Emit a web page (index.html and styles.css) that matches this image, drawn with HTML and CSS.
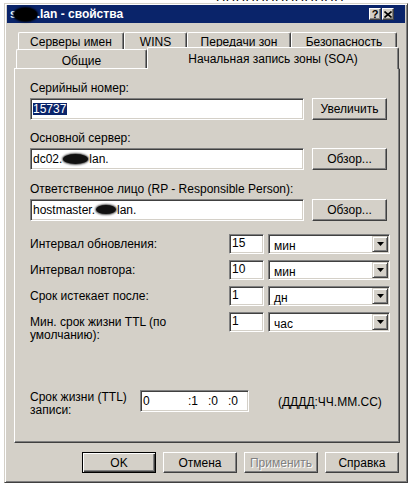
FILE: index.html
```html
<!DOCTYPE html>
<html lang="ru">
<head>
<meta charset="utf-8">
<title>свойства</title>
<link rel="stylesheet" href="styles.css">
</head>
<body>
<div class="behind"><span>ППППППППППППП</span></div>
<div class="window">
  <div class="titlebar">
    <span class="title"><span class="title-s">s</span><span class="blob blob-title"></span>.lan - свойства</span>
    <div class="tbtns">
      <span class="tbtn tbtn-help">?</span>
      <span class="tbtn tbtn-close"><svg width="8" height="7" viewBox="0 0 8 7"><path d="M0.5 0.5 L7.5 6.5 M7.5 0.5 L0.5 6.5" stroke="#000" stroke-width="1.6" fill="none"/></svg></span>
    </div>
  </div>

  <div class="tabs-back">
    <div class="tab tab-servers">Серверы имен</div>
    <div class="tab tab-wins">WINS</div>
    <div class="tab tab-transfer">Передачи зон</div>
    <div class="tab tab-security">Безопасность</div>
  </div>
  <div class="tabs-front">
    <div class="tab tab-general">Общие</div>
    <div class="tab tab-soa active">Начальная запись зоны (SOA)</div>
  </div>

  <div class="panel">
    <div class="section">
      <div class="field-label">Серийный номер:</div>
      <div class="field-row">
        <div class="input text-input"><span class="selected">15737</span></div>
        <div class="btn side-btn">Увеличить</div>
      </div>
    </div>
    <div class="section section-2">
      <div class="field-label">Основной сервер:</div>
      <div class="field-row">
        <div class="input text-input">dc02.<span class="blob blob-in1"></span>lan.</div>
        <div class="btn side-btn">Обзор...</div>
      </div>
    </div>
    <div class="section section-3">
      <div class="field-label">Ответственное лицо (RP - Responsible Person):</div>
      <div class="field-row">
        <div class="input text-input">hostmaster.<span class="blob blob-in2"></span>lan.</div>
        <div class="btn side-btn">Обзор...</div>
      </div>
    </div>

    <div class="intervals">
      <div class="irow">
        <div class="ilabel">Интервал обновления:</div>
        <div class="input num-input">15</div>
        <div class="input combo"><span class="combo-text">мин</span><span class="drop"><svg width="7" height="4" viewBox="0 0 7 4"><path d="M0 0 H7 L3.5 4 Z" fill="#000"/></svg></span></div>
      </div>
      <div class="irow">
        <div class="ilabel">Интервал повтора:</div>
        <div class="input num-input">10</div>
        <div class="input combo"><span class="combo-text">мин</span><span class="drop"><svg width="7" height="4" viewBox="0 0 7 4"><path d="M0 0 H7 L3.5 4 Z" fill="#000"/></svg></span></div>
      </div>
      <div class="irow">
        <div class="ilabel">Срок истекает после:</div>
        <div class="input num-input">1</div>
        <div class="input combo"><span class="combo-text">дн</span><span class="drop"><svg width="7" height="4" viewBox="0 0 7 4"><path d="M0 0 H7 L3.5 4 Z" fill="#000"/></svg></span></div>
      </div>
      <div class="irow">
        <div class="ilabel">Мин. срок жизни TTL (по<br>умолчанию):</div>
        <div class="input num-input">1</div>
        <div class="input combo"><span class="combo-text">час</span><span class="drop"><svg width="7" height="4" viewBox="0 0 7 4"><path d="M0 0 H7 L3.5 4 Z" fill="#000"/></svg></span></div>
      </div>
    </div>

    <div class="ttl-row">
      <div class="ttl-label">Срок жизни (TTL)<br>записи:</div>
      <div class="input ttl-input"><span class="ttl-d">0</span><span class="ttl-p">:1</span><span class="ttl-p">:0</span><span class="ttl-p">:0</span></div>
      <div class="ttl-hint">(ДДДД:ЧЧ.ММ.СС)</div>
    </div>
  </div>

  <div class="buttons">
    <div class="btn dlg-btn default">OK</div>
    <div class="btn dlg-btn">Отмена</div>
    <div class="btn dlg-btn disabled">Применить</div>
    <div class="btn dlg-btn">Справка</div>
  </div>
</div>
</body>
</html>
```
FILE: styles.css
```css
* { box-sizing: border-box; }

body {
  margin: 0;
  background: #fff;
  font-family: "Liberation Sans", Arial, sans-serif;
  font-size: 12px;
  color: #000;
}

.behind {
  height: 3px;
  overflow: hidden;
  padding-left: 216px;
}
.behind span {
  display: block;
  margin-top: -10px;
  font-size: 13px;
  line-height: 13px;
  letter-spacing: 0.5px;
}

.window {
  margin-left: 4px;
  width: 404px;
  height: 480px;
  background: #d4d0c8;
  border: 1px solid;
  border-color: #d4d0c8 #404040 #404040 #d4d0c8;
  box-shadow: inset 1px 1px #fff, inset -1px -1px #808080;
  padding: 1px 2px 0 2px;
}

/* title bar */
.titlebar {
  height: 18px;
  background: #0a246a;
  display: flex;
  align-items: center;
  justify-content: space-between;
  padding-left: 3px;
  padding-right: 11px;
}
.title {
  color: #fff;
  font-weight: bold;
  font-size: 12px;
  display: flex;
  align-items: center;
  white-space: pre;
}
.title-s { margin-right: -3px; }
.blob {
  display: inline-block;
  background: #000;
  border-radius: 50%;
}
.blob-title {
  width: 23px;
  height: 13px;
  margin-top: 1px;
  box-shadow: 0 0 2px 1px #000;
}
.tbtns {
  display: flex;
}
.tbtn {
  width: 12px;
  height: 12px;
  background: #d4d0c8;
  border: 1px solid;
  border-color: #fff #404040 #404040 #fff;
  box-shadow: inset -1px -1px #808080;
  display: flex;
  align-items: center;
  justify-content: center;
  font-weight: bold;
  font-size: 11px;
  line-height: 10px;
  color: #000;
}
.tbtn-help { margin-right: 1px; }

/* tabs */
.tabs-back {
  display: flex;
  margin-top: 9px;
  margin-left: 11px;
  height: 17px;
}
.tabs-front {
  display: flex;
  margin-left: 9px;
  height: 19px;
  align-items: flex-start;
}
.tab {
  height: 100%;
  border-top: 1px solid #fff;
  border-left: 1px solid #fff;
  border-right: 1px solid #404040;
  border-top-left-radius: 2px;
  border-top-right-radius: 2px;
  box-shadow: inset -1px 0 #808080;
  background: #d4d0c8;
  display: flex;
  justify-content: center;
  align-items: center;
  padding-top: 2px;
  white-space: nowrap;
}
.tab-servers { width: 106px; }
.tab-wins { width: 63px; }
.tab-transfer { width: 104px; }
.tab-security { width: 106px; }
.tab-general { width: 131px; height: 19px; padding-top: 3px; }
.tab-soa {
  width: 252px;
  height: 22px;
  margin-top: -2px;
  position: relative;
  z-index: 2;
  align-items: flex-start;
  padding-top: 4px;
}

/* panel */
.panel {
  margin-left: 7px;
  width: 386px;
  height: 375px;
  border: 1px solid;
  border-color: #fff #404040 #404040 #fff;
  box-shadow: inset -1px -1px #808080;
  padding: 13px 0 0 15px;
}
.field-label {
  height: 13px;
  line-height: 13px;
  white-space: nowrap;
}
.field-row {
  display: flex;
  margin-top: 3px;
}
.section-2 { margin-top: 12px; }
.section-3 { margin-top: 13px; }

.input {
  background: #fff;
  border: 1px solid;
  border-color: #808080 #fff #fff #808080;
  box-shadow: inset 1px 1px #404040, inset -1px -1px #d4d0c8;
  display: flex;
  align-items: center;
  padding-left: 2px;
  white-space: nowrap;
}
.text-input {
  width: 274px;
  height: 22px;
  padding-bottom: 1px;
}
.selected {
  background: #0a246a;
  color: #fff;
  line-height: 12px;
  padding-right: 1px;
}
.blob-in1 {
  width: 25px;
  height: 10px;
  margin: 0 1px;
  background: #111;
  box-shadow: 0 0 2px 1px #555;
}
.blob-in2 {
  width: 20px;
  height: 9px;
  margin: 0 1px;
  background: #111;
  box-shadow: 0 0 2px 1px #555;
}

.btn {
  background: #d4d0c8;
  border: 1px solid;
  border-color: #fff #404040 #404040 #fff;
  box-shadow: inset -1px -1px #808080;
  display: flex;
  align-items: center;
  justify-content: center;
  white-space: nowrap;
}
.side-btn {
  width: 75px;
  height: 22px;
  margin-left: 8px;
}

/* intervals */
.intervals {
  margin-top: 13px;
  display: flex;
  flex-direction: column;
  gap: 6px;
}
.irow {
  display: flex;
  align-items: flex-start;
}
.ilabel {
  width: 199px;
  padding-top: 4px;
  line-height: 13px;
}
.num-input {
  width: 35px;
  height: 20px;
  align-items: flex-start;
  padding-top: 1px;
  line-height: 14px;
}
.combo {
  width: 122px;
  height: 20px;
  margin-left: 4px;
  padding-left: 5px;
  justify-content: space-between;
  padding-right: 0;
}
.combo-text {
  padding-top: 3px;
}
.drop {
  width: 16px;
  height: 16px;
  background: #d4d0c8;
  border: 1px solid;
  border-color: #d4d0c8 #404040 #404040 #d4d0c8;
  box-shadow: inset 1px 1px #fff, inset -1px -1px #808080;
  display: flex;
  align-items: center;
  justify-content: center;
  margin-right: 1px;
}

/* ttl */
.ttl-row {
  display: flex;
  align-items: flex-start;
  margin-top: 48px;
}
.ttl-label {
  width: 110px;
  padding-top: 1px;
  line-height: 13px;
}
.ttl-input {
  width: 109px;
  height: 22px;
  padding-left: 2px;
  padding-bottom: 1px;
}
.ttl-d { width: 45px; }
.ttl-p { width: 20px; }
.ttl-hint {
  margin-left: 29px;
  padding-top: 6px;
  line-height: 13px;
}

/* dialog buttons */
.buttons {
  display: flex;
  justify-content: flex-end;
  gap: 7px;
  margin-top: 9px;
  margin-right: 6px;
}
.dlg-btn {
  width: 74px;
  height: 21px;
}
.dlg-btn.default {
  border: 1px solid #000;
  box-shadow: inset 1px 1px #fff, inset -1px -1px #404040, inset -2px -2px #808080;
}
.dlg-btn.disabled {
  color: #808080;
  text-shadow: 1px 1px #fff;
}
```
